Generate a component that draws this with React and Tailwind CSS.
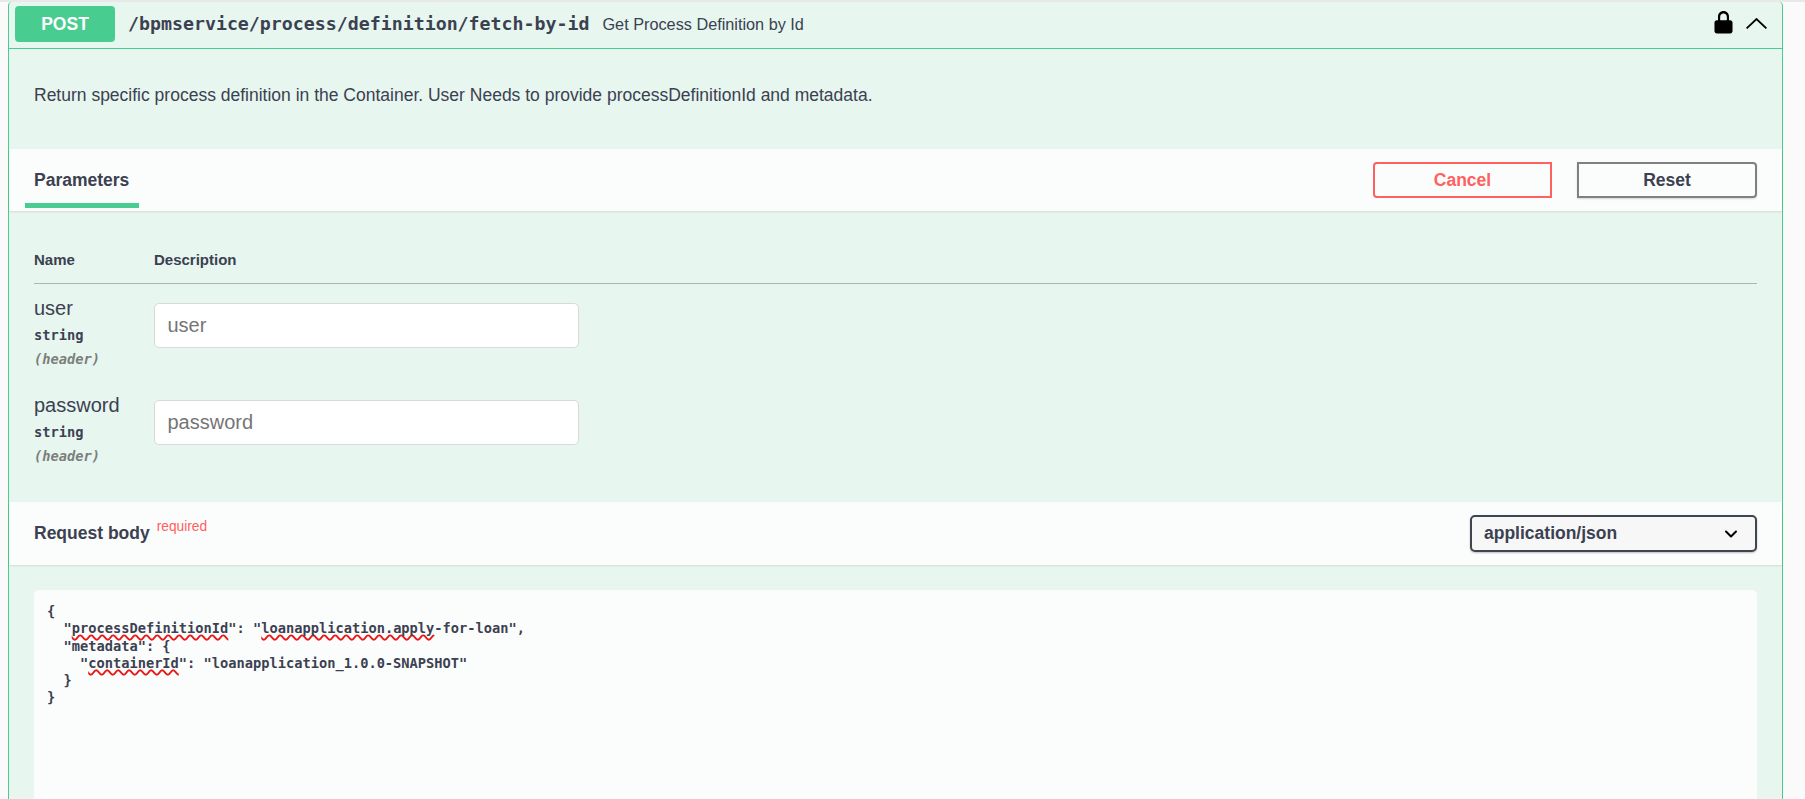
import React from 'react';
import { ChevronDown } from 'lucide-react';

const sans = "font-['Liberation_Sans',Arial,sans-serif]";
const mono = "font-['DejaVu_Sans_Mono',monospace]";

const Wavy = ({ children }) => (
  <span className="underline decoration-wavy decoration-[#e81818] decoration-[1.5px] underline-offset-1 [text-decoration-skip-ink:none]">{children}</span>
);

const ParamRow = ({ name }) => (
  <div className="flex h-[97px]">
    <div className="w-[120px] shrink-0">
      <div className="text-[20px] leading-[22px] mt-[-6px]">{name}</div>
      <div className={`${mono} text-[13.700px] font-bold leading-[20px] mt-[6px]`}>string</div>
      <div className={`${mono} text-[13.700px] font-bold italic leading-[20px] mt-[4px] text-[#7d7d7d]`}>(header)</div>
    </div>
    <input
      placeholder={name}
      className="w-[425px] h-[45px] px-[12.500px] bg-white rounded-[5px] border border-[#d9d9d9] text-[20px] outline-none placeholder:text-[#757575]"
    />
  </div>
);

const App = () => {
  return (
    <div className={`${sans} h-[799px] overflow-hidden bg-[#fafafa] text-[#3b4151] pl-2 pr-[22px] border-t-2 border-[#e8e8e8]`}>
      <div className="bg-[#e7f6ef] border-x border-[#49cc90] rounded-t-[4px] h-[830px]">
        {/* summary bar */}
        <div className="flex items-center h-[47px] border-b border-[#49cc90] pl-[6px] pr-[15px] pb-[2px]">
          <div className="w-[100px] h-[36px] rounded-[4px] bg-[#49cc90] text-white font-bold text-[17.500px] flex items-center justify-center">
            POST
          </div>
          <div className={`${mono} font-bold text-[18.250px] ml-[13px]`}>/bpmservice/process/definition/fetch-by-id</div>
          <div className="text-[16.250px] ml-[13px]">Get Process Definition by Id</div>
          <div className="ml-auto flex items-center gap-[12px] mb-[2px]">
            <svg width="19" height="23" viewBox="0 0 20 24" fill="#000" className="mr-[1px] mb-[2px]">
              <path d="M10 0C6.5 0 4.2 2.6 4.2 6v3.5H3C1.6 9.500.5 10.600.5 12v9c0 1.400 1.100 2.500 2.500 2.500h14c1.400 0 2.500-1.100 2.500-2.500v-9c0-1.400-1.100-2.500-2.500-2.500h-1.200V6C15.800 2.600 13.500 0 10 0zm0 2.400c2.200 0 3.500 1.500 3.500 3.700v3.400h-7V6.100C6.500 3.900 7.800 2.400 10 2.400z" />
            </svg>
            <svg width="21" height="11" viewBox="0 0 21 11" fill="none" stroke="#000" strokeWidth="1.800">
              <path d="M.6 10.400 10.500 1l9.900 9.400" />
            </svg>
          </div>
        </div>

        {/* description */}
        <div className="h-[100px] pl-[25px] pt-[35px] text-[17.500px] leading-[22px]">
          Return specific process definition in the Container. User Needs to provide processDefinitionId and metadata.
        </div>

        {/* parameters header */}
        <div className="h-[62px] bg-[#fbfdfc] shadow-[0_1px_2px_rgba(0,0,0,0.1)] flex items-center pl-[16px] pr-[25px]">
          <div className="w-[114px] h-[59px] border-b-[5px] border-[#49cc90] font-bold text-[17.500px] leading-[26px] pl-[9px] pt-[18px] self-start">
            Parameters
          </div>
          <button className="ml-auto w-[179px] h-[36px] rounded-l-[4px] border-[2.300px] border-[#ff6060] text-[#ff6060] font-bold text-[17.500px]">
            Cancel
          </button>
          <button className="ml-[25px] w-[180px] h-[36px] rounded-r-[4px] border-[2.300px] border-[#808080] font-bold text-[17.500px] shadow-[0_1px_2px_rgba(0,0,0,0.15)]">
            Reset
          </button>
        </div>

        {/* parameter table */}
        <div className="h-[291px] px-[25px] pt-[40px]">
          <div className="flex h-[33px] border-b border-[#a9b8b2] font-bold text-[15px] leading-[18px]">
            <div className="w-[120px]">Name</div>
            <div>Description</div>
          </div>
          <div className="pt-[19px]">
            <ParamRow name="user" />
            <ParamRow name="password" />
          </div>
        </div>

        {/* request body header */}
        <div className="h-[63px] bg-[#fbfdfc] shadow-[0_1px_2px_rgba(0,0,0,0.1)] flex items-center pl-[25px] pr-[25px]">
          <div className="font-bold text-[17.500px]">Request body</div>
          <div className="relative -top-[6px] ml-[7px] text-[13.750px] text-[#ff6060]">required</div>
          <div className="ml-auto w-[287px] h-[37px] rounded-[5px] border-2 border-[#41444e] bg-[#f7f7f7] shadow-[0_1px_2px_rgba(0,0,0,0.25)] flex items-center justify-between pl-[12px] pr-[14px] font-bold text-[17.500px]">
            application/json
            <ChevronDown size={20} color="#000" strokeWidth={2.400} />
          </div>
        </div>

        {/* request body editor */}
        <div className="px-[25px] pt-[25px]">
          <pre className={`${mono} font-bold text-[13.700px] leading-[17.300px] text-[#3b4151] bg-[#fbfdfc] rounded-[5px] h-[300px] pl-[13px] pt-[13px]`}>
{`{
  "`}<Wavy>processDefinitionId</Wavy>{`": "`}<Wavy>loanapplication.apply</Wavy>{`-for-loan",
  "metadata": {
    "`}<Wavy>containerId</Wavy>{`": "loanapplication_1.0.0-SNAPSHOT"
  }
}`}
          </pre>
        </div>
      </div>
    </div>
  );
};

export default App;
